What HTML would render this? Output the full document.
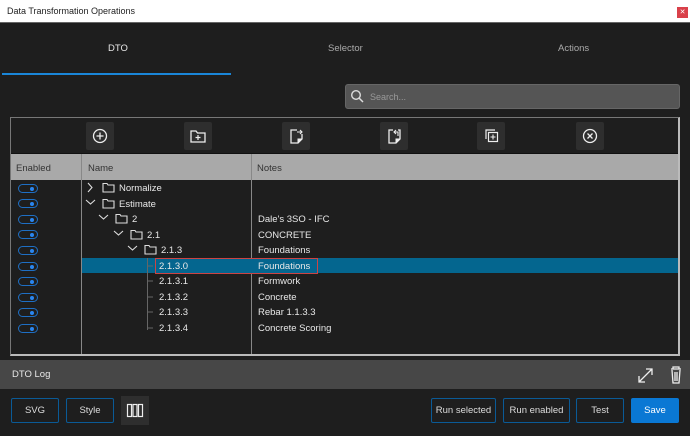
<!DOCTYPE html>
<html><head><style>
*{margin:0;padding:0;box-sizing:border-box}
body{width:690px;height:436px;background:#1e1e1e;font-family:"Liberation Sans",sans-serif;color:#e8e8e8;position:relative;overflow:hidden;font-size:9.5px}
.abs{position:absolute}
.title{left:0;top:0;width:690px;height:23px;background:#fff;border-bottom:1px solid #666;color:#222;font-size:9px;padding:6px 7px}
.close{right:2px;top:7px;width:11px;height:11px;background:#d9414a;color:#fff;font-size:7px;text-align:center;line-height:11px}
.tab{top:43px;font-size:9.5px}
.btn{height:25px;top:398px;border:1px solid #0a5a96;border-radius:2px;color:#ddd;text-align:center;line-height:23px;font-size:9.5px;background:#1e1e1e}
.ib{width:28px;height:28px;top:122px;background:#2e2e2e;border-radius:2px}
.ib svg{width:28px;height:28px}
.tg{left:18px;width:20px;height:9px;border:1.5px solid #1e6fc4;border-radius:5px}
.tg:after{content:"";position:absolute;right:3px;top:1.5px;width:4px;height:4px;border-radius:50%;background:#2a86f0}
.row{font-size:9.5px}
</style></head><body>
<div class="abs title">Data Transformation Operations</div>
<div class="abs close">✕</div>
<div class="abs tab" style="left:108px">DTO</div>
<div class="abs tab" style="left:328px;color:#aaa">Selector</div>
<div class="abs tab" style="left:558px;color:#aaa">Actions</div>
<div class="abs" style="left:2px;top:73px;width:229px;height:2px;background:#1a86d8"></div>
<div class="abs" style="left:345px;top:84px;width:335px;height:25px;background:#555;border:1px solid #666;border-radius:3px"></div>
<svg class="abs" style="left:350px;top:89px" width="14" height="14" viewBox="0 0 14 14"><circle cx="6" cy="6" r="4.3" fill="none" stroke="#ddd" stroke-width="1.4"/><path d="M9 9l4 4" stroke="#ddd" stroke-width="1.5"/></svg>
<div class="abs" style="left:370px;top:92px;color:#999;font-size:9px">Search...</div>
<div class="abs" style="left:10px;top:117px;width:670px;height:239px;border:1px solid #777;border-right:2px solid #bbb;border-bottom:2px solid #bbb"></div>
<div class="abs" style="left:11px;top:153px;width:667px;height:1px;background:#111"></div>
<div class="abs ib" style="left:86px"><svg viewBox="0 0 28 28"><circle cx="14" cy="14" r="6.5" fill="none" stroke="#eee" stroke-width="1.3"/><path d="M14 10.5v7M10.5 14h7" stroke="#eee" stroke-width="1.3"/></svg></div>
<div class="abs ib" style="left:184px"><svg viewBox="0 0 28 28"><path d="M7 9h5l1.5 2H21v9H7z" fill="none" stroke="#eee" stroke-width="1.3"/><path d="M14 13v5M11.5 15.5h5" stroke="#eee" stroke-width="1.2"/></svg></div>
<div class="abs ib" style="left:282px"><svg viewBox="0 0 28 28"><path d="M15 8H9v13h7l4-4v-5M9 8" fill="none" stroke="#eee" stroke-width="1.3"/><path d="M16 21v-4h4" fill="#eee" stroke="#eee"/><path d="M15 10h5M18 8l2 2-2 2" fill="none" stroke="#eee" stroke-width="1.1"/></svg></div>
<div class="abs ib" style="left:380px"><svg viewBox="0 0 28 28"><path d="M13 8H9v13h7l4-4V8h-2" fill="none" stroke="#eee" stroke-width="1.3"/><path d="M16 21v-4h4" fill="#eee" stroke="#eee"/><path d="M14 10h4v4M16 8l-2 2 2 2" fill="none" stroke="#eee" stroke-width="1.1"/></svg></div>
<div class="abs ib" style="left:477px"><svg viewBox="0 0 28 28"><path d="M9 17V8h9" fill="none" stroke="#eee" stroke-width="1.2"/><rect x="11.5" y="10.5" width="9" height="9" fill="none" stroke="#eee" stroke-width="1.2"/><path d="M16 12.5v5M13.5 15h5" stroke="#eee" stroke-width="1.1"/></svg></div>
<div class="abs ib" style="left:576px"><svg viewBox="0 0 28 28"><circle cx="14" cy="14" r="6.5" fill="none" stroke="#eee" stroke-width="1.3"/><path d="M11.5 11.5l5 5M16.5 11.5l-5 5" stroke="#eee" stroke-width="1.3"/></svg></div>
<div class="abs" style="left:11px;top:154px;width:667px;height:26px;background:#a9a9a9;color:#333;font-size:9.5px"></div>
<div class="abs" style="left:16px;top:163px;color:#333">Enabled</div>
<div class="abs" style="left:88px;top:163px;color:#333">Name</div>
<div class="abs" style="left:257px;top:163px;color:#333">Notes</div>
<div class="abs" style="left:81px;top:154px;width:1px;height:200px;background:#888"></div>
<div class="abs" style="left:251px;top:154px;width:1px;height:200px;background:#888"></div>
<div class="abs" style="left:82px;top:258px;width:596px;height:15px;background:#04668f"></div>
<div class="abs" style="left:155px;top:258px;width:163px;height:16px;border:1px solid #c44"></div>
<div class="abs" style="left:147px;top:258px;width:1px;height:72px;background:#666"></div>
<div class="abs tg" style="top:184px"></div><div class="abs tg" style="top:199px"></div><div class="abs tg" style="top:215px"></div><div class="abs tg" style="top:230px"></div><div class="abs tg" style="top:246px"></div><div class="abs tg" style="top:262px"></div><div class="abs tg" style="top:277px"></div><div class="abs tg" style="top:293px"></div><div class="abs tg" style="top:308px"></div><div class="abs tg" style="top:324px"></div>
<svg class="abs" style="left:0;top:0" width="690" height="436">
<g fill="none" stroke="#ddd" stroke-width="1.1">
<path d="M88 183l4 4.5-4 4.5"/>
<path d="M86 200l4.5 4 4.5-4"/>
<path d="M99 215l4.5 4 4.5-4"/>
<path d="M114 231l4.5 4 4.5-4"/>
<path d="M128 246l4.5 4 4.5-4"/>
<path d="M103 183.5h4l1 1.5h6v7h-11z"/>
<path d="M103 199.5h4l1 1.5h6v7h-11z"/>
<path d="M116 214.5h4l1 1.5h6v7h-11z"/>
<path d="M131 230.5h4l1 1.5h6v7h-11z"/>
<path d="M145 245.5h4l1 1.5h6v7h-11z"/>
</g>
<g stroke="#666"><path d="M148 266h5M148 281h5M148 297h5M148 312h5M148 328h5"/></g>
</svg>
<div class="abs row" style="left:119px;top:183px">Normalize</div>
<div class="abs row" style="left:119px;top:199px">Estimate</div>
<div class="abs row" style="left:132px;top:214px">2</div>
<div class="abs row" style="left:147px;top:230px">2.1</div>
<div class="abs row" style="left:161px;top:245px">2.1.3</div>
<div class="abs row" style="left:159px;top:261px">2.1.3.0</div>
<div class="abs row" style="left:159px;top:276px">2.1.3.1</div>
<div class="abs row" style="left:159px;top:292px">2.1.3.2</div>
<div class="abs row" style="left:159px;top:307px">2.1.3.3</div>
<div class="abs row" style="left:159px;top:323px">2.1.3.4</div>
<div class="abs row" style="left:258px;top:214px">Dale's 3SO - IFC</div>
<div class="abs row" style="left:258px;top:230px">CONCRETE</div>
<div class="abs row" style="left:258px;top:245px">Foundations</div>
<div class="abs row" style="left:258px;top:261px">Foundations</div>
<div class="abs row" style="left:258px;top:276px">Formwork</div>
<div class="abs row" style="left:258px;top:292px">Concrete</div>
<div class="abs row" style="left:258px;top:307px">Rebar 1.1.3.3</div>
<div class="abs row" style="left:258px;top:323px">Concrete Scoring</div>
<div class="abs" style="left:0;top:360px;width:690px;height:29px;background:#474747"></div>
<div class="abs" style="left:12px;top:369px">DTO Log</div>
<svg class="abs" style="left:636px;top:364px" width="50" height="22"><g stroke="#eee" stroke-width="1.3" fill="none"><path d="M3 18L16 5M10 5h6v6M3 12v6h6"/><path d="M35 5h10M37 5V3h6v2M36 6l1 13h6l1-13M39 8v9M41 8v9"/></g></svg>
<div class="abs btn" style="left:11px;width:48px">SVG</div>
<div class="abs btn" style="left:66px;width:48px">Style</div>
<div class="abs" style="left:121px;top:396px;width:28px;height:29px;background:#2e2e2e"></div>
<svg class="abs" style="left:121px;top:396px" width="28" height="29"><g fill="none" stroke="#eee" stroke-width="1.2"><rect x="6.5" y="8.5" width="4" height="12"/><rect x="12" y="8.5" width="4" height="12"/><rect x="17.5" y="8.5" width="4" height="12"/></g></svg>
<div class="abs btn" style="left:431px;width:65px">Run selected</div>
<div class="abs btn" style="left:503px;width:67px">Run enabled</div>
<div class="abs btn" style="left:576px;width:48px">Test</div>
<div class="abs btn" style="left:631px;width:48px;background:#0a78d4;border-color:#0a78d4;color:#fff">Save</div>
</body></html>
